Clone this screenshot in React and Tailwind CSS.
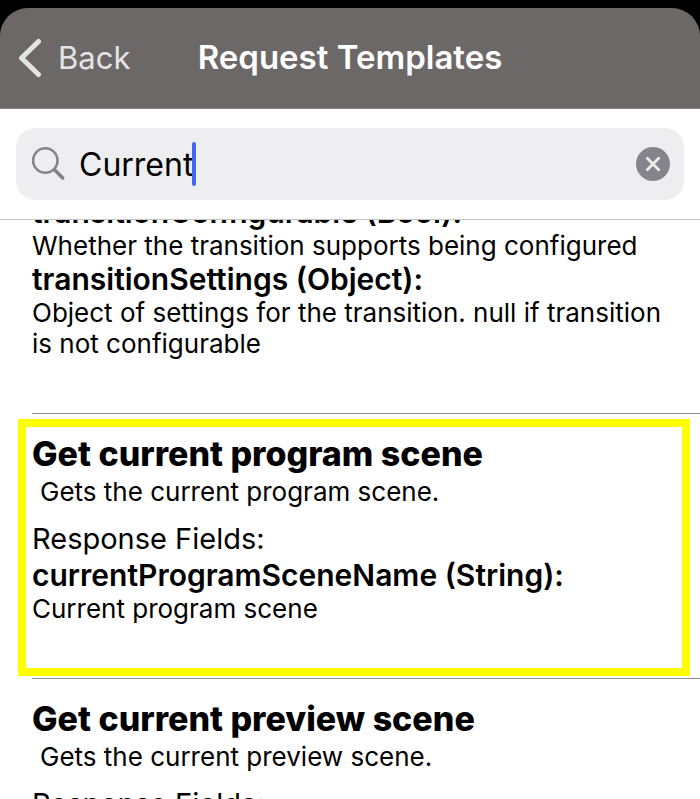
import { useState } from 'react'

const templates = [
    {
        title: 'Get current scene transition',
        description: 'Gets information about the current scene transition.',
        fields: [
            {
                name: 'transitionConfigurable (Bool):',
                text: 'Whether the transition supports being configured',
            },
            {
                name: 'transitionSettings (Object):',
                text: 'Object of settings for the transition. null if transition is not configurable',
            },
        ],
        scrolled: true,
    },
    {
        title: 'Get current program scene',
        description: 'Gets the current program scene.',
        fields: [{ name: 'currentProgramSceneName (String):', text: 'Current program scene' }],
        highlighted: true,
    },
    {
        title: 'Get current preview scene',
        description: 'Gets the current preview scene.',
        fields: [],
    },
]

function Header() {
    return (
        <header className="grid h-[101px] grid-cols-[1fr_auto_1fr] items-center rounded-t-[28px] border-b border-[#858086] bg-[#6c6867] px-4">
            <button type="button" className="flex items-center gap-4 text-[31px] text-[#e5e4e4]">
                <svg className="h-10 w-[26px]" viewBox="0 0 26 40" fill="none" stroke="currentColor" strokeWidth="5" strokeLinecap="round" strokeLinejoin="round">
                    <path d="M22.5 3.5L5.5 20l17 16.5" />
                </svg>
                Back
            </button>
            <h1 className="text-[33px] font-semibold text-white">Request Templates</h1>
        </header>
    )
}

function SearchBar() {
    const [query, setQuery] = useState('Current')

    return (
        <div className="border-b border-[#c6c6c8] bg-white px-4 py-[19px]">
            <div className="relative flex h-[72px] items-center rounded-[20px] bg-[#eeeef0] pr-[14px] pl-4">
                <svg className="h-9 w-9 shrink-0" viewBox="0 0 36 36" fill="none" stroke="#85848a" strokeLinecap="round">
                    <circle cx="13.3" cy="14.5" r="12.2" strokeWidth="2.6" />
                    <path d="M22.5 23.8l8.2 8.2" strokeWidth="3.6" />
                </svg>
                <input
                    type="text"
                    aria-label="Search templates"
                    value={query}
                    onChange={(e) => setQuery(e.target.value)}
                    className="ml-[11px] min-w-0 flex-1 bg-transparent pt-0.5 text-[32px] text-black outline-none"
                />
                {/* Text cursor */}
                <span className="absolute top-[14px] left-[176px] h-11 w-1 rounded-full bg-[#4169f0]" />
                <button type="button" aria-label="Clear search" onClick={() => setQuery('')}>
                    <svg className="h-[34px] w-[34px]" viewBox="0 0 34 34" strokeWidth="2.8" strokeLinecap="round">
                        <circle cx="17" cy="17" r="17" fill="#85848a" />
                        <path d="M11.3 11.3l11.4 11.4M22.7 11.3L11.3 22.7" stroke="#eeeef0" />
                    </svg>
                </button>
            </div>
        </div>
    )
}

function Template({ title, description, fields, highlighted, scrolled }) {
    return (
        <section className="relative ml-8 border-b border-[#8e8c93] pt-5 pr-8 pb-[54px]">
            {!scrolled && (
                <>
                    <h2 className="mb-0.5 text-[34px] leading-10 font-extrabold">{title}</h2>
                    <p className="pl-2 text-[26px] leading-[31px]">{description}</p>
                    <p className="mt-[14px] text-[29px] leading-9">Response Fields:</p>
                </>
            )}
            {fields.map((field) => (
                <div key={field.name}>
                    <h3 className="text-[30px] leading-9 font-semibold">{field.name}</h3>
                    <p className="text-[26px] leading-[31px]">{field.text}</p>
                </div>
            ))}
            {highlighted && (
                <div className="pointer-events-none absolute top-[5px] right-[10px] bottom-[2px] left-[-14px] border-8 border-[#ffff00]" />
            )}
        </section>
    )
}

export default function App() {
    return (
        <div className="flex h-screen flex-col overflow-hidden bg-black pt-2 font-['Inter',sans-serif] text-black">
            <Header />
            <SearchBar />
            <main className="min-h-0 flex-1 overflow-hidden bg-white">
                <div className="-mt-[46px]">
                    {templates.map((template) => (
                        <Template key={template.title} {...template} />
                    ))}
                </div>
            </main>
        </div>
    )
}
